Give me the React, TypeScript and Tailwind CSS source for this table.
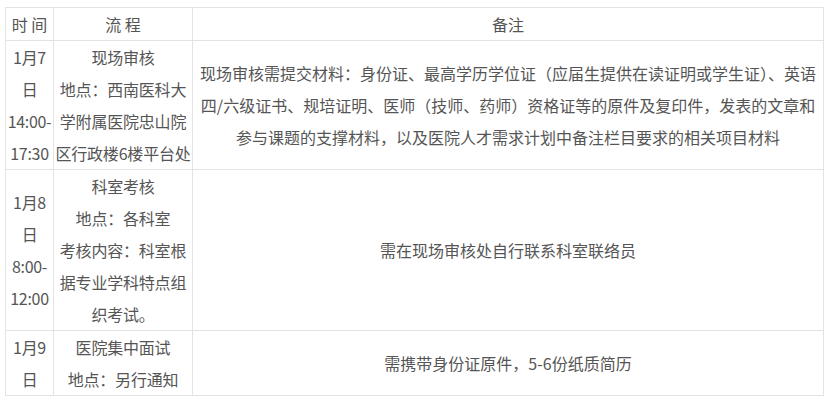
const rows = [
  {
    time: ["1月7", "日", "14:00-", "17:30"],
    flow: ["现场审核", "地点：西南医科大", "学附属医院忠山院", "区行政楼6楼平台处"],
    note: [
      "现场审核需提交材料：身份证、最高学历学位证（应届生提供在读证明或学生证）、英语",
      "四/六级证书、规培证明、医师（技师、药师）资格证等的原件及复印件，发表的文章和",
      "参与课题的支撑材料，以及医院人才需求计划中备注栏目要求的相关项目材料",
    ],
  },
  {
    time: ["1月8", "日", "8:00-", "12:00"],
    flow: ["科室考核", "地点：各科室", "考核内容：科室根", "据专业学科特点组", "织考试。"],
    note: ["需在现场审核处自行联系科室联络员"],
  },
  {
    time: ["1月9", "日"],
    flow: ["医院集中面试", "地点：另行通知"],
    note: ["需携带身份证原件，5-6份纸质简历"],
  },
];

export default function App() {
  return (
    <div
      className="h-[400px] w-[830px] overflow-hidden bg-white pl-[5px] pt-[7px] text-[16px] leading-[32px] text-[#555]"
      style={{ fontFamily: '"Noto Sans CJK SC", "Noto Sans", sans-serif' }}
    >
      <table className="w-[818px] table-fixed border-collapse">
        <colgroup>
          <col className="w-[48px]" />
          <col className="w-[139px]" />
          <col className="w-[631px]" />
        </colgroup>
        <thead>
          <tr>
            <th className="border border-[#e3e3e3] p-0 text-center font-normal">时 间</th>
            <th className="border border-[#e3e3e3] p-0 text-center font-normal">流 程</th>
            <th className="border border-[#e3e3e3] p-0 text-center font-normal">备注</th>
          </tr>
        </thead>
        <tbody>
          {rows.map((row, i) => (
            <tr key={i}>
              <td className="border border-[#e3e3e3] p-0 text-center align-middle">
                {row.time.map((t) => (
                  <div key={t} className="whitespace-nowrap tracking-[-0.3px]">
                    {t}
                  </div>
                ))}
              </td>
              <td className="border border-[#e3e3e3] p-0 text-center align-middle">
                {row.flow.map((f) => (
                  <div key={f} className="whitespace-nowrap tracking-[-0.2px]">
                    {f}
                  </div>
                ))}
              </td>
              <td className="border border-[#e3e3e3] p-0 text-center align-middle">
                {row.note.map((n) => (
                  <div key={n} className="whitespace-nowrap">
                    {n}
                  </div>
                ))}
              </td>
            </tr>
          ))}
        </tbody>
      </table>
    </div>
  );
}
